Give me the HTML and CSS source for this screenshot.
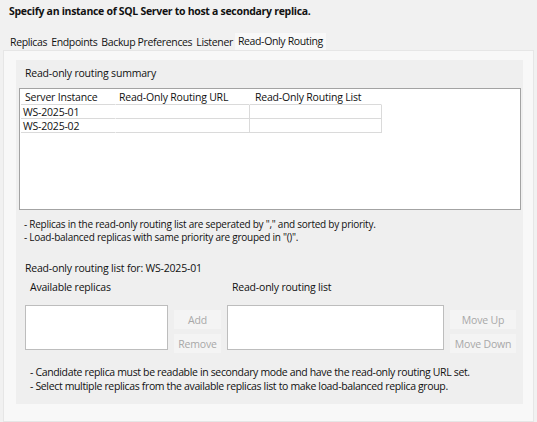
FILE: index.html
```html
<!DOCTYPE html>
<html lang="en">
<head>
    <meta charset="UTF-8">
    <title>Read-Only Routing</title>
    <link rel="stylesheet" href="styles.css">
</head>
<body>
    <header class="titulo">Specify an instance of SQL Server to host a secondary replica.</header>
    <nav class="abas">
        <span class="aba">Replicas</span>
        <span class="aba">Endpoints</span>
        <span class="aba">Backup Preferences</span>
        <span class="aba">Listener</span>
        <span class="aba ativa">Read-Only Routing</span>
    </nav>
    <main class="painel">
        <section class="grupo">
            <p class="rotulo">Read-only routing summary</p>
            <div class="tabela">
                <div class="linha cabecalho">
                    <span class="cel c1">Server Instance</span>
                    <span class="cel c2">Read-Only Routing URL</span>
                    <span class="cel c3">Read-Only Routing List</span>
                </div>
                <div class="linha">
                    <span class="cel c1">WS-2025-01</span>
                    <span class="cel c2"></span>
                    <span class="cel c3"></span>
                </div>
                <div class="linha">
                    <span class="cel c1">WS-2025-02</span>
                    <span class="cel c2"></span>
                    <span class="cel c3"></span>
                </div>
            </div>
            <div class="notas">
                <p>- Replicas in the read-only routing list are seperated by "," and sorted by priority.</p>
                <p>- Load-balanced replicas with same priority are grouped in "()".</p>
            </div>
            <p class="rotulo para">Read-only routing list for: WS-2025-01</p>
            <div class="listas">
                <div class="coluna">
                    <p class="sub">Available replicas</p>
                    <div class="caixa pequena"></div>
                </div>
                <div class="botoes">
                    <button class="btn" disabled>Add</button>
                    <button class="btn" disabled>Remove</button>
                </div>
                <div class="coluna">
                    <p class="sub">Read-only routing list</p>
                    <div class="caixa grande"></div>
                </div>
                <div class="botoes">
                    <button class="btn largo" disabled>Move Up</button>
                    <button class="btn largo" disabled>Move Down</button>
                </div>
            </div>
            <div class="dicas">
                <p>- Candidate replica must be readable in secondary mode and have the read-only routing URL set.</p>
                <p>- Select multiple replicas from the available replicas list to make load-balanced replica group.</p>
            </div>
        </section>
    </main>
</body>
</html>
```

FILE: styles.css
```css
* {
    padding: 0px;
    margin: 0px;
    box-sizing: border-box;
    font-family: "Open Sans", "Noto Sans", sans-serif;
}
:root {
    --fundo: #f1f1f1;
    --painel: #f8f8f8;
    --grupo: #efefef;
    --borda: #a3a3a3;
    --linha: #dadada;
    --texto: #111111;
    --apagado: #a8a8a8;
}
body {
    width: 537px;
    height: 422px;
    background-color: var(--fundo);
    color: var(--texto);
    font-size: 10.5px;
    letter-spacing: -0.2px;
    overflow: hidden;
}
.titulo {
    font-size: 10.5px;
    font-weight: 700;
    padding: 4px 0px 0px 9px;
    height: 33px;
    letter-spacing: -0.3px;
}
.abas {
    display: flex;
    padding-left: 8px;
    height: 17px;
    align-items: flex-end;
}
.aba {
    padding: 0px 2px 1px 2px;
    letter-spacing: -0.35px;
}
.aba.ativa {
    background-color: var(--painel);
    height: 17px;
    padding: 1px 3px 0px 3px;
}
.painel {
    margin: 0px 3px 0px 3px;
    height: 372px;
    background-color: var(--painel);
    border: 1px solid #e6e6e6;
    padding: 9px 10px 0px 12px;
}
.grupo {
    background-color: var(--grupo);
    height: 344px;
    padding: 5px 2px 0px 3px;
}
.rotulo {
    padding-left: 6px;
    height: 23px;
    line-height: 16px;
}
.tabela {
    background-color: #ffffff;
    border: 1px solid var(--borda);
    height: 122px;
    padding-left: 1px;
}
.linha {
    display: flex;
    height: 14px;
    line-height: 14px;
}
.linha.cabecalho {
    height: 16px;
    line-height: 16px;
}
.cel {
    border-bottom: 1px solid var(--linha);
    border-right: 1px solid var(--linha);
}
.cabecalho .cel {
    border-right-color: #ffffff;
}
.c1 { width: 95px; padding-left: 4px; border-right-color: #ffffff; }
.linha:not(.cabecalho) .c1 { padding-left: 2px; }
.c2 { width: 134px; padding-left: 3px; }
.c3 { width: 132px; padding-left: 5px; }
.notas {
    font-family: "Liberation Sans", Arial, sans-serif;
    font-size: 10px;
    letter-spacing: -0.25px;
    line-height: 12.5px;
    padding: 8px 0px 0px 5px;
    height: 50px;
}
.rotulo.para {
    height: 20px;
}
.listas {
    display: flex;
    gap: 6px;
    padding-left: 6px;
}
.sub {
    padding-left: 5px;
    height: 25px;
    line-height: 15px;
}
.caixa {
    background-color: #ffffff;
    border: 1px solid #bdbdbd;
    height: 45px;
}
.caixa.pequena { width: 143px; }
.caixa.grande { width: 217px; }
.botoes {
    display: flex;
    flex-direction: column;
    gap: 5px;
    padding-top: 30px;
}
.btn {
    font-family: inherit;
    font-size: 10.5px;
    letter-spacing: -0.2px;
    color: var(--apagado);
    background-color: #f4f4f4;
    border: none;
    width: 47px;
    height: 19px;
}
.btn.largo {
    width: 66px;
}
.dicas {
    padding: 12px 0px 0px 11px;
    line-height: 14px;
    letter-spacing: -0.35px;
}
```
